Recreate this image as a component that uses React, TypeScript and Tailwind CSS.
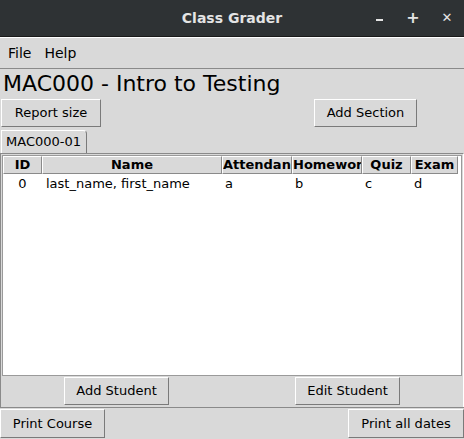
import React from 'react';

const font = { fontFamily: '"DejaVu Sans", Verdana, sans-serif' };

function TkButton({ label, className = '' }: { label: string; className?: string }) {
  return (
    <button
      className={`h-[28px] px-0 whitespace-nowrap text-[13px] text-black bg-[#d9d9d9] border border-t-white border-l-white border-r-[#7a7a7a] border-b-[#7a7a7a] ${className}`}
    >
      {label}
    </button>
  );
}

const columns = [
  { label: 'ID', w: 'w-[39px]' },
  { label: 'Name', w: 'w-[180px]' },
  { label: 'Attendance', w: 'w-[70px]' },
  { label: 'Homework', w: 'w-[70px]' },
  { label: 'Quiz', w: 'w-[49px]' },
  { label: 'Exam', w: 'w-[47px]' },
];

export default function App() {
  return (
    <div className="w-[464px] h-[439px] bg-[#d9d9d9] flex flex-col overflow-hidden" style={font}>
      {/* title bar */}
      <div className="h-[36px] bg-[#2e3234] flex items-center relative shrink-0">
        <div className="flex-1 text-center text-[14px] font-bold text-[#e4e4e4]">Class Grader</div>
        <div className="absolute right-0 top-0 h-full flex items-center text-[#e4e4e4] font-bold">
          <span className="w-[34px] flex justify-center pt-[4px]">
            <span className="block w-[7px] h-[2px] bg-[#e4e4e4]" />
          </span>
          <span className="w-[34px] text-center text-[16px]">+</span>
          <span className="w-[34px] text-center text-[13px]">✕</span>
        </div>
      </div>
      <div className="h-px bg-[#1a1a1a] shrink-0" />

      {/* menu */}
      <div className="h-[32px] flex items-center gap-[13px] px-[8px] text-[14px] text-black border-b border-[#8a8a8a] border-t border-t-white shrink-0">
        <span>File</span>
        <span>Help</span>
      </div>

      <div className="text-[22px] text-black leading-[30px] pl-[3px] shrink-0 whitespace-nowrap">MAC000 - Intro to Testing</div>

      <div className="flex justify-between pl-[1px] pr-[47px] shrink-0">
        <TkButton label="Report size" className="w-[100px]" />
        <TkButton label="Add Section" className="w-[103px]" />
      </div>

      {/* tab */}
      <div className="flex mt-[3px] shrink-0">
        <div className="ml-[1px] w-[86px] h-[23px] text-[13px] whitespace-nowrap leading-[22px] pl-[4px] border border-b-0 border-t-white border-l-white border-r-[#7a7a7a] rounded-tr-[4px] text-black">
          MAC000-01
        </div>
      </div>

      {/* table frame */}
      <div className="flex-1 flex flex-col border-t border-l border-r border-t-[#8a8a8a] border-l-[#8a8a8a] border-r-white">
        <div className="flex-1 mx-[1px] mt-[1px] bg-white border border-[#9a9a9a] flex flex-col">
          <div className="flex h-[18px] text-[13px] font-bold text-black">
            {columns.map((c) => (
              <div
                key={c.label}
                className={`${c.w} shrink-0 overflow-hidden whitespace-nowrap ${c.label === 'Attendance' || c.label === 'Homework' ? 'text-left' : 'text-center'} bg-[#d9d9d9] border border-t-white border-l-white border-r-[#8a8a8a] border-b-[#8a8a8a] leading-[16px]`}
              >
                {c.label}
              </div>
            ))}
          </div>
          <div className="flex h-[18px] text-[13px] text-black leading-[18px] mt-[1px] whitespace-nowrap">
            <div className="w-[39px] text-center">0</div>
            <div className="w-[180px] pl-[4px]">last_name, first_name</div>
            <div className="w-[70px] pl-[3px]">a</div>
            <div className="w-[70px] pl-[3px]">b</div>
            <div className="w-[49px] pl-[3px]">c</div>
            <div className="w-[47px] pl-[3px]">d</div>
          </div>
        </div>
        <div className="h-[31px] shrink-0 relative">
          <TkButton label="Add Student" className="absolute left-[63px] top-[1px] w-[105px]" />
          <TkButton label="Edit Student" className="absolute left-[294px] top-[1px] w-[105px]" />
        </div>
      </div>

      <div className="h-[32px] flex justify-between items-start border-t border-[#8a8a8a] pt-[1px] shrink-0">
        <TkButton label="Print Course" className="w-[105px] h-[29px]" />
        <TkButton label="Print all dates" className="w-[116px] h-[29px]" />
      </div>
    </div>
  );
}
